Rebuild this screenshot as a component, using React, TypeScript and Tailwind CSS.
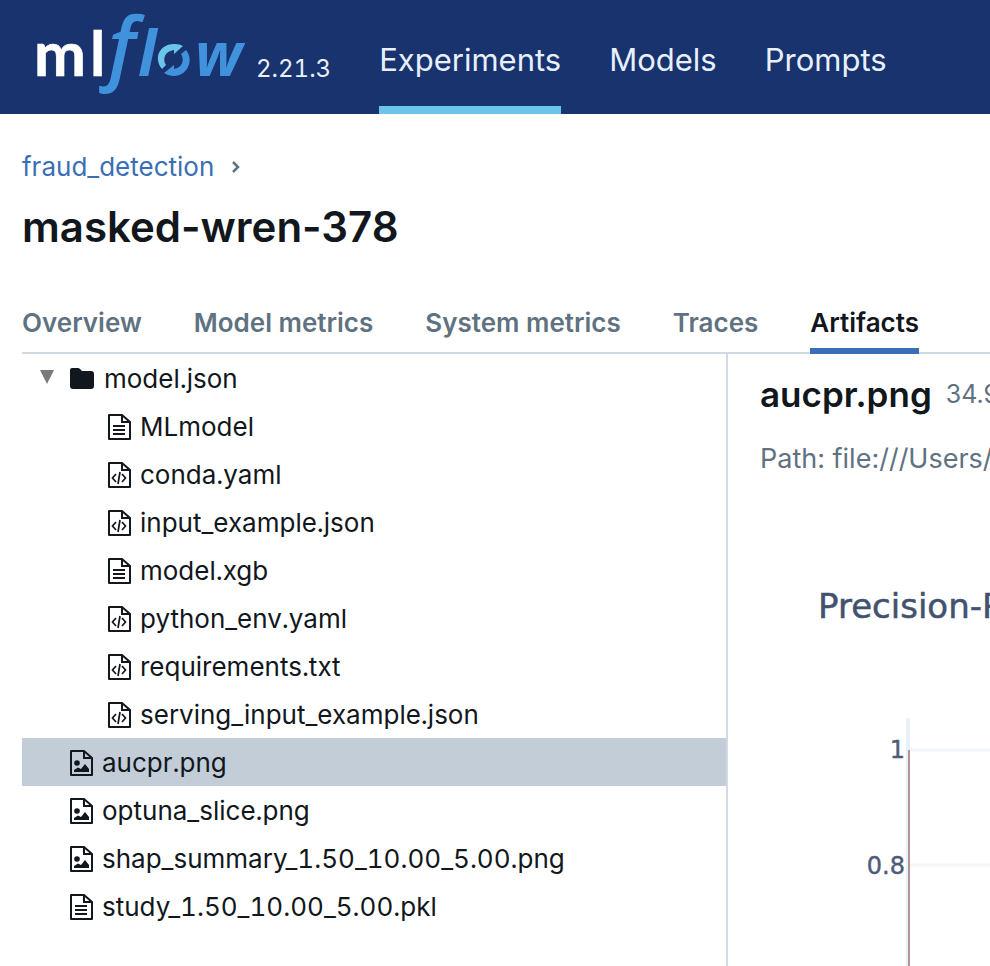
import React, { useState } from "react";

type Kind = "text" | "code" | "image";
type Entry = { name: string; kind: Kind };

const modelFiles: Entry[] = [
  { name: "MLmodel", kind: "text" },
  { name: "conda.yaml", kind: "code" },
  { name: "input_example.json", kind: "code" },
  { name: "model.xgb", kind: "text" },
  { name: "python_env.yaml", kind: "code" },
  { name: "requirements.txt", kind: "code" },
  { name: "serving_input_example.json", kind: "code" },
];

const rootFiles: Entry[] = [
  { name: "aucpr.png", kind: "image" },
  { name: "optuna_slice.png", kind: "image" },
  { name: "shap_summary_1.50_10.00_5.00.png", kind: "image" },
  { name: "study_1.50_10.00_5.00.pkl", kind: "text" },
];

const tabs = ["Overview", "Model metrics", "System metrics", "Traces", "Artifacts"];

function Logo() {
  return (
    <svg width="220" height="100" viewBox="-8 0 220 100" role="img" aria-label="mlflow" className="shrink-0 overflow-visible">
      <g fill="#ffffff" stroke="#ffffff" strokeWidth="0.6" fontSize="62" fontWeight="700" className="font-['Lato',sans-serif]">
        <text x="-2" y="76">m</text>
        <text x="54" y="76">l</text>
      </g>
      <g fill="#4192dc" fontStyle="italic" className="font-['Open_Sans',sans-serif]">
        <text x="72" y="75" fontSize="80" fontWeight="600">f</text>
        <text x="102" y="76" fontSize="62" fontWeight="700">l</text>
        <text x="159" y="76" fontSize="60" fontWeight="700">w</text>
      </g>
      <path d="M126 69 C116 56 126 43 139 44 Q144 44 147 46 L138 54 V50 C129 51 126 59 130 65 Z" fill="#6bc5ea" />
      <path d="M150 50 C159 61 150 77 137 76 Q132 76 128 73 L138 65 V69 C146 68 149 60 145 54 Z" fill="#4192dc" />
    </svg>
  );
}

function FileIcon({ kind }: { kind: Kind }) {
  return (
    <svg width="24" height="28" viewBox="0 0 24 28" fill="none" stroke="#11171c" strokeWidth="2" aria-hidden="true" className="shrink-0">
      <path d="M2 2H15L23 9V26H2Z" strokeLinejoin="round" />
      <path d="M15 2V9H23" />
      {kind === "text" && <path d="M6 13H18M6 17H18M6 21H18" />}
      {kind === "code" && (
        <path d="M9 13L5.5 17L9 21M15 13L18.500 17L15 21M13 11L11 23" strokeWidth="1.7" />
      )}
      {kind === "image" && (
        <g fill="#11171c" stroke="none">
          <circle cx="8" cy="14" r="2.800" />
          <path d="M5 23V21L9 18.500L12 20L16 15L20 20V23Z" />
        </g>
      )}
    </svg>
  );
}

function FolderIcon() {
  return (
    <svg width="26" height="22" viewBox="0 0 26 22" fill="#11171c" aria-hidden="true" className="shrink-0">
      <path d="M3 0H9Q10 0 11 1L13 3H22Q25 3 25 6V18Q25 21 22 21H4Q1 21 1 18V2Q1 0 3 0Z" />
    </svg>
  );
}

function Chart() {
  return (
    <svg width="900" height="500" viewBox="0 0 900 500" role="img" aria-label="Precision-Recall Curve" className="block max-w-none font-['DejaVu_Sans',sans-serif]">
      <text x="58" y="78" fontSize="34" fill="#42526f" stroke="#42526f" strokeWidth="0.5">Precision-Recall Curve</text>
      <g fill="#4d5b78" stroke="#4d5b78" strokeWidth="0.4" fontSize="24" textAnchor="end">
        <text x="145" y="218">1</text>
        <text x="145" y="334">0.8</text>
      </g>
      <path d="M148 210H900M148 325H900" stroke="#f2f5fb" strokeWidth="3" />
      <path d="M148 178V500" stroke="#ebf0f8" strokeWidth="4" />
      <path d="M149 210V500" stroke="#b3949b" strokeWidth="2" />
    </svg>
  );
}

export default function App() {
  const [open, setOpen] = useState(true);
  const [selected, setSelected] = useState("aucpr.png");
  const [tab, setTab] = useState("Artifacts");

  const row = (f: Entry, indent: string) => (
    <li key={f.name}>
      <button
        type="button"
        onClick={() => setSelected(f.name)}
        className={`flex h-12 w-full items-center gap-[9px] pt-0.5 text-left ${indent} ${selected === f.name ? "bg-[#c3cdd7]" : ""}`}
      >
        <FileIcon kind={f.kind} />
        <span>{f.name}</span>
      </button>
    </li>
  );

  return (
    <div className="flex h-screen flex-col overflow-hidden bg-white font-['Inter',sans-serif] text-[26px] leading-8 text-[#11171c]">
      <header className="flex h-[114px] shrink-0 items-stretch bg-[#18336e] text-[#e8f0fc]">
        <a href="#home" className="flex items-start gap-2 pl-7">
          <Logo />
          <span className="pt-[53px] text-[24px] tabular-nums">2.21.3</span>
        </a>
        <nav className="ml-12 flex gap-12 text-[31px]">
          <a href="#experiments" className="border-b-8 border-[#6bc5ea] pt-11">Experiments</a>
          <a href="#models" className="pt-11">Models</a>
          <a href="#prompts" className="pt-11">Prompts</a>
        </nav>
      </header>

      <main className="flex min-h-0 flex-1 flex-col pl-[22px]">
        <nav aria-label="Breadcrumb" className="mt-[37px] flex items-center gap-4">
          <a href="#fraud_detection" className="text-[#3a6fb5]">fraud_detection</a>
          <svg width="12" height="16" viewBox="0 0 12 16" fill="none" stroke="#5f7281" strokeWidth="2.500" aria-hidden="true">
            <path d="M3 3L8 8L3 13" />
          </svg>
        </nav>
        <h1 className="mt-[18px] text-[42px] leading-13 font-semibold">masked-wren-378</h1>

        <div role="tablist" className="mt-9 flex shrink-0 gap-13 border-b-2 border-[#d1d9e1] font-semibold">
          {tabs.map((t) => (
            <button
              key={t}
              type="button"
              role="tab"
              aria-selected={tab === t}
              onClick={() => setTab(t)}
              className={`-mb-0.5 h-[65px] border-b-6 pt-2 whitespace-nowrap ${
                tab === t ? "border-[#3a6fb5] text-[#11171c]" : "border-transparent text-[#5f7281]"
              }`}
            >
              {t}
            </button>
          ))}
        </div>

        <div className="flex min-h-0 flex-1">
          <ul className="w-[706px] shrink-0 border-r-2 border-[#d1d9e1] tabular-nums">
            <li>
              <button
                type="button"
                aria-expanded={open}
                onClick={() => setOpen(!open)}
                className="flex h-12 w-full items-center pt-0.5 pl-[18px] text-left"
              >
                <svg width="14" height="14" viewBox="0 0 14 14" aria-hidden="true" className={open ? "mb-1" : "mb-1 -rotate-90"}>
                  <path d="M0 0H14L7 14Z" fill="#7b7b7b" />
                </svg>
                <span className="ml-[15px] flex items-center gap-[9px]">
                  <FolderIcon />
                  <span>model.json</span>
                </span>
              </button>
              {open && <ul>{modelFiles.map((f) => row(f, "pl-[85px]"))}</ul>}
            </li>
            {rootFiles.map((f) => row(f, "pl-[47px]"))}
          </ul>

          <section className="min-w-0 flex-1 overflow-hidden pt-4">
            <div className="flex items-center gap-3.5 pl-8 whitespace-nowrap">
              <h2 className="text-[35px] leading-12 font-semibold">{selected}</h2>
              <span className="text-[25px] text-[#5f7281]">34.97KB</span>
            </div>
            <p className="mt-[25px] pl-8 text-[27px] whitespace-nowrap text-[#5f7281]">
              Path: file:///Users/shared/mlruns/artifacts/aucpr.png
            </p>
            <div className="mt-[65px] pl-8">
              <Chart />
            </div>
          </section>
        </div>
      </main>
    </div>
  );
}
